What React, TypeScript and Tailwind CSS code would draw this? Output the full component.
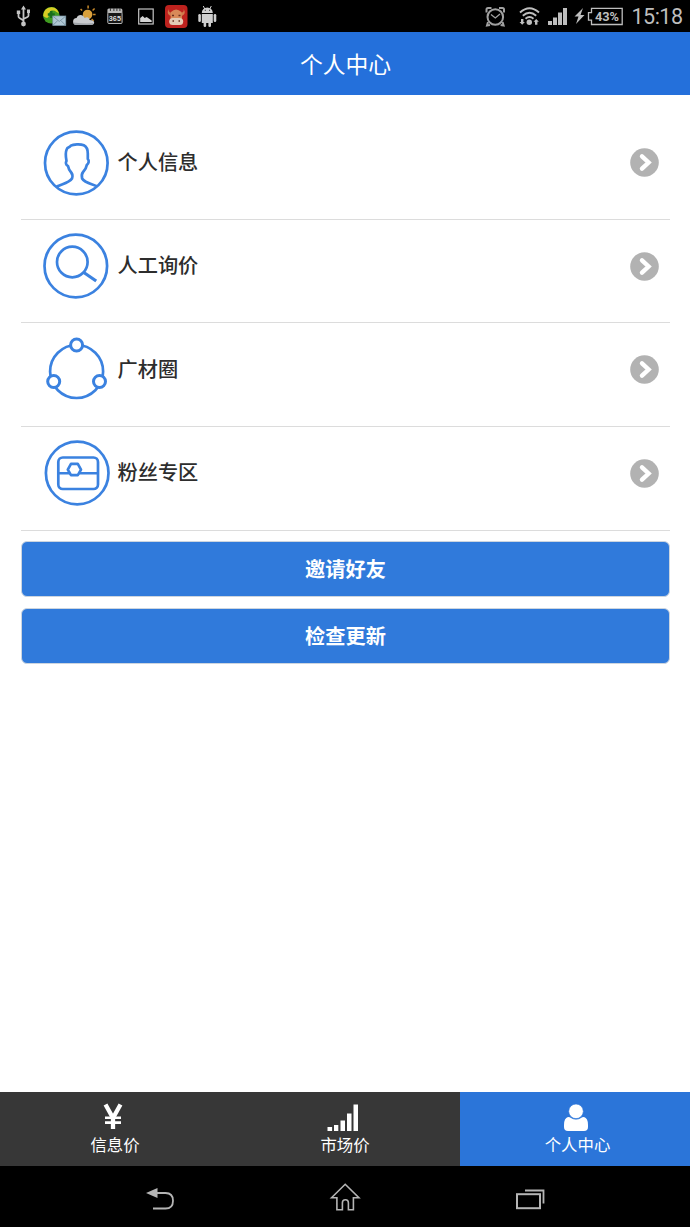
import type { ReactNode } from "react";

const BLUE = "#3b82e0";

function Slot({ x, w = 30.7, children }: { x: number; w?: number; children: ReactNode }) {
  return (
    <svg width={w} height="32" viewBox={`${x} 0 ${w} 32`} className="shrink-0" fill="none">
      {children}
    </svg>
  );
}

function StatusBar() {
  return (
    <div className="flex h-8 shrink-0 justify-between bg-black pl-[8px]">
      <div className="flex">
        <Slot x={8}>
          <g stroke="#c4c4c4" strokeWidth="1.8">
            <path d="M23.5 8v15M18.5 12v4.5q0 1 1 1.5l4 2.5M28.5 11v4.5q0 1-1 1.5l-4 2" />
          </g>
          <path d="M23.5 5.5l2.5 4h-5zM16.8 10.5h3.4v3.4h-3.4zM27 9.5h3v3.4h-3z" fill="#c4c4c4" />
          <circle cx="23.5" cy="24" r="2.4" fill="#c4c4c4" />
        </Slot>
        <Slot x={38.7}>
          <circle cx="51" cy="15.3" r="8.3" fill="#3f9b20" />
          <path d="M43 16c0-5 3-8 7-8.500 5-1 8 3 8.500 6-2-1-3-3-6-3s-4 2-4 5-3 3-5.500.500z" fill="#d8cc24" />
          <path d="M51 11v7M47.500 14.500h7" stroke="#176d1b" strokeWidth="2.400" />
          <rect x="52.500" y="16" width="13" height="9.500" fill="#afc7d4" stroke="#7894a3" strokeWidth=".7" />
          <path d="M53 16.500l6 5 6-5M53 25l4.500-4.500M65 25l-4.500-4.500" stroke="#6f8999" strokeWidth=".8" />
        </Slot>
        <Slot x={69.4}>
          <path d="M81 9l1.500 1.500M88.500 5.500v3M95 8.500l-2 2M96 14.500h-2.500M94 21l-2-2" stroke="#c98a2a" strokeWidth="1.500" />
          <circle cx="88" cy="14.500" r="4.800" fill="#d9a03c" />
          <path d="M77 25a3.500 3.500 0 0 1 0-7c1-4 7-4 8 0 3-2 5 0 5 2 6 0 6 5 1 5z" fill="#c9cbce" />
          <path d="M74 22.500q0 2.500 3 2.500h14q3 0 3.500-2-8 1-20.500-.500z" fill="#9fa3a8" />
        </Slot>
        <Slot x={100.1}>
          <path d="M109 8.500h12q1.500 0 1.500 1.500V13h-15v-3Q107.500 8.500 109 8.500z" fill="#bababa" />
          <path d="M110.500 8v3M114 8v3M117 8v3M120 8v3" stroke="#333" />
          <rect x="107.900" y="12.500" width="14.300" height="11" rx="1" fill="#171717" stroke="#bdbdbd" />
          <text x="115" y="21" textAnchor="middle" fontSize="7.300" fontWeight="bold" fill="#ddd" className="font-['Liberation_Sans',sans-serif]">365</text>
        </Slot>
        <Slot x={130.8}>
          <rect x="138.500" y="9" width="14.500" height="15" stroke="#c4c4c4" strokeWidth="1.200" />
          <path d="M140 22v-4l2.500-2 2 2 2-1 5 3.500V22z" fill="#d4d4d4" />
        </Slot>
        <Slot x={161.5}>
          <rect x="165.500" y="5" width="22.500" height="23" rx="4" fill="#bd221e" />
          <path d="M169.500 9c-1 3 1 4 4 3h6.500c3 1 5 0 4-3 3 4 0 6-1.500 7v7h-11.500v-7c-1.500-1-4.500-3-1.500-7z" fill="#cf7b4d" />
          <path d="M171.500 12q5-5 10.500 0v6h-10.500z" fill="#d88a59" />
          <rect x="169.700" y="18" width="14" height="7" rx="3.500" fill="#e4cbb5" />
          <path d="M172.500 15.500h2M179 15.500h2M173 21h1.500M179 21h1.500" stroke="#6a3020" strokeWidth="1.300" />
        </Slot>
        <Slot x={192.2}>
          <g fill="#cfcfcf">
            <path d="M202 13a5.500 5.500 0 0 1 11 0zM202 14h11v9h-11z" />
            <rect x="198.500" y="14" width="2.600" height="8" rx="1.300" />
            <rect x="213.900" y="14" width="2.600" height="8" rx="1.300" />
            <rect x="203.800" y="21" width="2.600" height="6" rx="1.300" />
            <rect x="208.600" y="21" width="2.600" height="6" rx="1.300" />
          </g>
          <path d="M203.500 6l1.500 3M211.500 6L210 9" stroke="#cfcfcf" />
          <path d="M205 10.300h1M209.300 10.300h1" stroke="#222" />
        </Slot>
      </div>
      <div className="flex text-[#bebebe]">
        <Slot x={480} w={30}>
          <g stroke="currentColor" strokeWidth="2" opacity=".85">
            <circle cx="495.300" cy="17" r="7.800" />
            <path d="M491 14.500l4.300 3.500 4.700-4" strokeWidth="1.300" />
            <path d="M486.500 12.500V9.500q0-1.500 1.500-1.500h3.500M504 12.500V9.500q0-1.500-1.500-1.500H499M488 22l-1 3.500 3-.500M502.600 22l1 3.500-3-.500" />
          </g>
        </Slot>
        <Slot x={510} w={35}>
          <g stroke="currentColor" strokeWidth="1.900">
            <path d="M520 12.500q9.500-8.500 19 0M522.800 15.700q6.700-5.800 13.400 0M525.500 18.700q4-3.500 8 0" />
          </g>
          <circle cx="529.300" cy="22.300" r="2.700" fill="currentColor" />
          <path d="M521 19h2.400v3h1.500l-2.700 2.800-2.700-2.800h1.500zM535 24.800h2.400v-3h1.500l-2.700-2.800-2.700 2.800h1.500z" fill="currentColor" />
        </Slot>
        <Slot x={545} w={27}>
          <path d="M548 21h4v4h-4zM553 17.500h4V25h-4zM558 12.500h4V25h-4zM563 8h4v17h-4z" fill="currentColor" />
        </Slot>
        <Slot x={572} w={56}>
          <path d="M583 8l-8.500 8.500h4L576 24l8.500-9h-4z" fill="currentColor" />
          <path d="M591.500 8.300h30.700v16.200h-30.700v-4.300h-3v-7.600h3z" stroke="currentColor" strokeWidth="1.300" />
          <text x="607" y="21" textAnchor="middle" fontSize="12.800" fontWeight="700" fill="currentColor" className="font-[Roboto,sans-serif]">43%</text>
        </Slot>
        <div className="w-[62px] pt-px pl-[3.5px] font-[Roboto,sans-serif] text-[21.5px] leading-[32px] tracking-[-0.5px]">15:18</div>
      </div>
    </div>
  );
}

function PersonIcon() {
  return (
    <>
      <circle cx="36.300" cy="36" r="31.300" />
      <path d="M16.700 59.500c5-2.500 12.500-3.500 15.300-8 .8-2.500.5-4.500-.800-6-1.800-2-2.700-3.500-3.200-6.500-2.200-.8-2.600-3.500-1.500-5-.8-4-1-9 .3-12 .8-2 3-1.500 4-3.300 2.500-1.500 9.500-2 13-.4 3.500 1.800 4 5 4 8.200v5.500c1.600 1.500 1 4.700-1 6-.5 3.500-1.800 5-3.700 7-1.500 1.700-1.700 3.500-1 6.500 2.500 4.500 10 5.500 15.400 8" />
    </>
  );
}

function SearchIcon() {
  return (
    <>
      <circle cx="35.800" cy="36" r="31.300" />
      <circle cx="32.300" cy="32" r="15.300" />
      <path d="M43.800 42.500l12.400 8.500" strokeWidth="3.200" />
    </>
  );
}

function CircleIcon() {
  return (
    <>
      <circle cx="36.600" cy="37.500" r="26.500" />
      <g fill="#fff" strokeWidth="3">
        <circle cx="36.600" cy="11" r="6" />
        <circle cx="13.700" cy="47.500" r="6" />
        <circle cx="59.500" cy="47.500" r="6" />
      </g>
    </>
  );
}

function ChestIcon() {
  return (
    <>
      <circle cx="37.200" cy="36" r="31.300" />
      <rect x="18.300" y="20.500" width="39.700" height="31.500" rx="4.500" />
      <path d="M18.300 36.300h39.700" strokeWidth="2.400" />
      <path d="M31 26.800h6.800l3.200 5.800-3.200 5.500H31l-3.200-5.500z" fill="#fff" />
    </>
  );
}

const rows = [
  { label: "个人信息", icon: <PersonIcon /> },
  { label: "人工询价", icon: <SearchIcon /> },
  { label: "广材圈", icon: <CircleIcon /> },
  { label: "粉丝专区", icon: <ChestIcon /> },
];

function Row({ label, icon }: { label: string; icon: ReactNode }) {
  return (
    <li className="flex h-[103.63px] items-start border-b border-[#dcdcdc] pt-[10.52px] pr-[11px] pl-[18.5px]">
      <svg width="72" height="72" viewBox="0 0 72 72" fill="none" stroke={BLUE} strokeWidth="2.700" strokeLinejoin="round">
        {icon}
      </svg>
      <span className="ml-[6px] flex-1 text-[20.2px] leading-[70px] font-medium text-[#2d2d2d]">{label}</span>
      <svg className="mt-[21.500px]" width="29" height="29" viewBox="0 0 29 29" fill="none">
        <circle cx="14.500" cy="14.500" r="14.300" fill="#b2b2b2" />
        <path d="M12 8.300l6.600 6.200-6.600 6.200" stroke="#fff" strokeWidth="4.400" strokeLinecap="round" />
      </svg>
    </li>
  );
}

function Action({ label }: { label: string }) {
  return (
    <button className="h-[56px] w-full rounded-[6px] border border-[#ccd5df] bg-[#307adb] text-[20.2px] font-bold text-white">
      {label}
    </button>
  );
}

function Tab({ label, active = false, children }: { label: string; active?: boolean; children: ReactNode }) {
  return (
    <div className={`flex w-1/3 flex-col items-center pt-[10px] text-white ${active ? "bg-[#2b75d9] pl-[5px]" : "bg-[#373737]"}`}>
      {children}
      <span className="-mt-px text-[16.4px] leading-[22px]">{label}</span>
    </div>
  );
}

export default function App() {
  return (
    <div className="flex h-[1227px] w-[690px] flex-col overflow-hidden bg-white font-['Noto_Sans_CJK_SC',sans-serif]">
      <StatusBar />
      <header className="flex h-[63px] shrink-0 items-center justify-center bg-[#2470db] pt-[2px] pl-px text-[22.8px] text-white">
        个人中心
      </header>
      <main className="flex-1 pt-[21px] pr-[20px] pl-[21px]">
        <ul>
          {rows.map((r) => (
            <Row key={r.label} {...r} />
          ))}
        </ul>
        <div className="flex flex-col gap-[11px] pt-[10.400px]">
          <Action label="邀请好友" />
          <Action label="检查更新" />
        </div>
      </main>
      <footer className="flex h-[74px] shrink-0">
        <Tab label="信息价">
          <svg width="36" height="32" viewBox="0 0 36 32" className="mr-[4px]" fill="none" stroke="#fff">
            <path d="M10.500 2.500l7.500 13.500 7.500-13.500M18 15v12" strokeWidth="4.300" />
            <path d="M10 15.800h16M10 20.600h16" strokeWidth="2.600" />
          </svg>
        </Tab>
        <Tab label="市场价">
          <svg width="36" height="32" viewBox="0 0 36 32" className="mr-[4px]" fill="#fff">
            <path d="M2.500 25h4.600v4H2.500zM9 23h4.300v6H9zM15.500 18.500h4.500V29h-4.500zM22 11.500h4.500V29H22zM28.500 2.500H33V29h-4.500z" />
          </svg>
        </Tab>
        <Tab label="个人中心" active>
          <svg width="36" height="32" viewBox="0 0 36 32" className="mr-[4px]" fill="#fff">
            <path d="M10 15q2 0 3 1.100 5 3 10 0 1-1.100 3-1.100 4 1 4 8v2q0 4-4 4H10q-4 0-4-4v-2q0-7 4-8z" />
            <circle cx="18" cy="9.300" r="7.400" stroke="#2b75d9" strokeWidth=".8" />
          </svg>
        </Tab>
      </footer>
      <nav className="flex h-[61px] shrink-0 items-center justify-between bg-black px-[145px] pt-[4px]">
        <svg width="30" height="32" viewBox="145 1183.500 30 32" fill="none">
          <path d="M155 1193.500h10.500q7.500 0 7.500 7.700 0 7.800-7.500 7.800H153" stroke="#b5b5b5" strokeWidth="1.800" />
          <path d="M146 1193.500l11.500-5v10z" fill="#b5b5b5" />
        </svg>
        <svg width="32" height="32" viewBox="329 1183 32 32" fill="none" stroke="#b5b5b5" strokeWidth="1.600">
          <path d="M331.500 1197.800l13.700-13.500 13.700 13.500h-5.500v12h-5v-7q0-3-3-3t-3 3v7h-5.500v-12z" />
        </svg>
        <svg width="30" height="32" viewBox="515.500 1183.500 30 32" fill="none" stroke="#b5b5b5">
          <rect x="517.500" y="1194.700" width="23" height="14" strokeWidth="2" />
          <path d="M525.500 1191H544v13" strokeWidth="1.800" />
        </svg>
      </nav>
    </div>
  );
}
